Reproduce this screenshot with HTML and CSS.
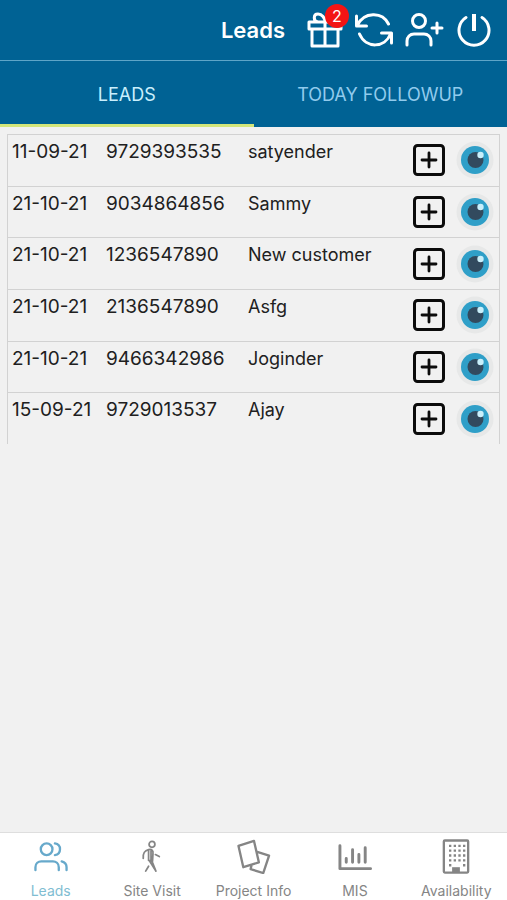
FILE: index.html
```html
<!DOCTYPE html>
<html lang="en">
<head>
    <meta charset="UTF-8">
    <meta name="viewport" content="width=device-width, initial-scale=1.0">
    <title>Leads</title>
    <link rel="stylesheet" href="styles.css">
</head>
<body>
    <!-- Shared icons -->
    <svg class="sprite" aria-hidden="true">
        <symbol id="plus" viewBox="0 0 32 32">
            <rect x="1.5" y="1.5" width="29" height="29" rx="3" fill="none" stroke="#0b0b0b" stroke-width="3"/>
            <path d="M16 9v14M9 16h14" fill="none" stroke="#0b0b0b" stroke-width="2.800" stroke-linecap="round"/>
        </symbol>
        <symbol id="eye" viewBox="0 0 38 38">
            <circle cx="19" cy="19" r="18.500" fill="#e7e8e8"/>
            <circle cx="19" cy="19" r="14" fill="#2f9fc8"/>
            <circle cx="19.500" cy="19" r="8" fill="#324a5e"/>
            <circle cx="24.500" cy="14" r="3.200" fill="#c9effa"/>
        </symbol>
    </svg>

    <header class="header">
        <h1>Leads</h1>
        <div class="actions">
            <button class="action" aria-label="Offers">
                <svg width="36" height="40" viewBox="0 0 36 40"><path d="M2 12h32v7H2zM5 19v17h26V19M18 12v24M18 12h-7c-5-1-5-8 0-8 4 0 7 4 7 8zm0 0h7c5-1 5-8 0-8-4 0-7 4-7 8z"/></svg>
                <span class="badge">2</span>
            </button>
            <button class="action" aria-label="Refresh">
                <svg width="38" height="34" viewBox="0 0 38 34"><path d="M1.500 3v10h10M2.500 12C9-1 27-2 33.500 11M36.500 30V20h-10M35.500 21C30 35 11 36 4.500 21"/></svg>
            </button>
            <button class="action" aria-label="Add lead">
                <svg width="40" height="34" viewBox="0 0 40 34"><circle cx="14" cy="8" r="6.500"/><path d="M2 32v-4c0-4 3-7 7-7h10c4 0 7 3 7 7v4M32 10v10M27 15h10"/></svg>
            </button>
            <button class="action" aria-label="Log out">
                <svg width="34" height="36" viewBox="0 0 34 36"><path d="M17 2v17" stroke-width="4" stroke-linecap="butt"/><path d="M9 5.500a15 15 0 1 0 16 0"/></svg>
            </button>
        </div>
    </header>

    <nav class="tabs">
        <a href="#" class="tab active">LEADS</a>
        <a href="#" class="tab">TODAY FOLLOWUP</a>
    </nav>

    <main class="content">
        <table class="leads">
            <tr>
                <td class="date">11-09-21</td><td class="phone">9729393535</td><td>satyender</td>
                <td class="tools"><div class="tools-row">
                    <button class="plus" aria-label="Add followup"><svg><use href="#plus"/></svg></button>
                    <button class="eye" aria-label="View lead"><svg><use href="#eye"/></svg></button>
                </div></td>
            </tr>
            <tr>
                <td class="date">21-10-21</td><td class="phone">9034864856</td><td>Sammy</td>
                <td class="tools"><div class="tools-row">
                    <button class="plus" aria-label="Add followup"><svg><use href="#plus"/></svg></button>
                    <button class="eye" aria-label="View lead"><svg><use href="#eye"/></svg></button>
                </div></td>
            </tr>
            <tr>
                <td class="date">21-10-21</td><td class="phone">1236547890</td><td>New customer</td>
                <td class="tools"><div class="tools-row">
                    <button class="plus" aria-label="Add followup"><svg><use href="#plus"/></svg></button>
                    <button class="eye" aria-label="View lead"><svg><use href="#eye"/></svg></button>
                </div></td>
            </tr>
            <tr>
                <td class="date">21-10-21</td><td class="phone">2136547890</td><td>Asfg</td>
                <td class="tools"><div class="tools-row">
                    <button class="plus" aria-label="Add followup"><svg><use href="#plus"/></svg></button>
                    <button class="eye" aria-label="View lead"><svg><use href="#eye"/></svg></button>
                </div></td>
            </tr>
            <tr>
                <td class="date">21-10-21</td><td class="phone">9466342986</td><td>Joginder</td>
                <td class="tools"><div class="tools-row">
                    <button class="plus" aria-label="Add followup"><svg><use href="#plus"/></svg></button>
                    <button class="eye" aria-label="View lead"><svg><use href="#eye"/></svg></button>
                </div></td>
            </tr>
            <tr>
                <td class="date">15-09-21</td><td class="phone">9729013537</td><td>Ajay</td>
                <td class="tools"><div class="tools-row">
                    <button class="plus" aria-label="Add followup"><svg><use href="#plus"/></svg></button>
                    <button class="eye" aria-label="View lead"><svg><use href="#eye"/></svg></button>
                </div></td>
            </tr>
        </table>
    </main>

    <!-- Bottom navigation -->
    <nav class="bottom-nav">
        <a href="#" class="nav-item active">
            <svg viewBox="0 0 36 36"><circle cx="13.500" cy="10.500" r="6"/><path d="M2 32v-3c0-4 3-6 6-6h12c3 0 6 2 6 6v3M22 4.500c7 1 7 11 0 12M29 23c3.500 1 5 3 5 6v3"/></svg>
            <span>Leads</span>
        </a>
        <a href="#" class="nav-item">
            <svg viewBox="0 0 36 36"><g stroke-width="1.800"><circle cx="18" cy="5.500" r="3"/><path d="M14.500 11c-4 1-6 3-5.500 9M14.500 11c3-1 5 1 4.500 4l-.5 8-4-1V11zM17 12v10M21.500 16l4 2M18 23l4 10M15 22l7 11M14.500 28l-3 5"/></g></svg>
            <span>Site Visit</span>
        </a>
        <a href="#" class="nav-item">
            <svg viewBox="0 0 36 36"><path d="M2 7l16-5 5 22-16 5zM20.500 13l13 4-6 18-13-4 1-4"/></svg>
            <span>Project Info</span>
        </a>
        <a href="#" class="nav-item">
            <svg viewBox="0 0 36 36"><path d="M2.500 7v23.500H34" stroke-width="3"/><path d="M9 20v4M15.500 11v13M22 16v8M28.500 9v15" stroke-width="3"/></svg>
            <span>MIS</span>
        </a>
        <a href="#" class="nav-item">
            <svg viewBox="0 0 36 36"><rect x="5.500" y="1.500" width="25" height="33" rx="1"/><path d="M10.800 7h17M10.800 12h17M10.800 17h17M10.800 22h17M10.800 27h2.400M25.200 27h2.400" stroke-width="2.400" stroke-dasharray="2.400 2.400" stroke-linecap="butt"/><path d="M14 29h8v5h-8z" fill="currentColor" stroke="none"/></svg>
            <span>Availability</span>
        </a>
    </nav>
</body>
</html>
```
FILE: styles.css
```css
* {
    box-sizing: border-box;
}

body {
    margin: 0;
    min-height: 100vh;
    display: flex;
    flex-direction: column;
    font-family: Inter, 'Liberation Sans', sans-serif;
    background-color: #f1f1f1;
    color: #202020;
}

.sprite {
    position: absolute;
    width: 0;
    height: 0;
}

button {
    padding: 0;
    border: none;
    background: none;
    cursor: pointer;
}

svg {
    display: block;
}

a {
    text-decoration: none;
}

/* Header */
.header {
    height: 61px;
    padding-right: 16px;
    display: flex;
    justify-content: flex-end;
    align-items: center;
    gap: 22px;
    background-color: #006294;
    border-bottom: 1px solid #5ea5c8;
    color: white;
}

.header h1 {
    margin: 0;
    font-size: 22px;
    font-weight: 600;
}

.actions {
    display: flex;
    align-items: center;
    gap: 12px;
}

.action {
    position: relative;
    color: white;
}

.action svg {
    fill: none;
    stroke: currentColor;
    stroke-width: 3;
    stroke-linecap: round;
    stroke-linejoin: round;
}

.badge {
    position: absolute;
    top: -6px;
    right: -6px;
    width: 24px;
    height: 24px;
    border-radius: 50%;
    background-color: #f31414;
    font-family: Inter, sans-serif;
    font-size: 16px;
    line-height: 24px;
}

/* Tabs */
.tabs {
    display: flex;
    height: 66px;
    background-color: #006294;
}

.tab {
    flex: 1;
    display: flex;
    justify-content: center;
    align-items: center;
    border-top: 3px solid transparent;
    border-bottom: 3px solid transparent;
    font-size: 18px;
    color: #91cbed;
}

.tab.active {
    color: #c9effd;
    border-bottom-color: #d3e67a;
}

/* Leads list */
.content {
    flex: 1;
    padding: 7px 7px 0;
}

.leads {
    width: 100%;
    height: 310px;
    table-layout: fixed;
    border-spacing: 0;
    border-left: 1px solid #d2d2d2;
    border-right: 1px solid #d2d2d2;
}

.leads td {
    padding: 6px 0 0;
    border-top: 1px solid #d2d2d2;
    vertical-align: top;
    font-size: 18px;
    line-height: 22px;
    white-space: nowrap;
}

.leads .date {
    width: 98px;
    padding-left: 4px;
    font-size: 19px;
}

.leads .phone {
    width: 142px;
    font-size: 19px;
}

.leads .tools {
    width: 90px;
    padding: 0 5px 0 0;
    vertical-align: middle;
}

.tools-row {
    display: flex;
    justify-content: flex-end;
    align-items: center;
    gap: 11px;
}

.plus svg {
    width: 32px;
    height: 32px;
}

.eye svg {
    width: 38px;
    height: 38px;
}

/* Bottom navigation */
.bottom-nav {
    display: flex;
    height: 68px;
    background-color: white;
    border-top: 1px solid #dedede;
}

.nav-item {
    flex: 1;
    display: flex;
    flex-direction: column;
    align-items: center;
    gap: 8px;
    padding-top: 6px;
    font-size: 14px;
    line-height: 18px;
    color: #858585;
}

.nav-item svg {
    width: 36px;
    height: 36px;
    fill: none;
    stroke: currentColor;
    stroke-width: 2.4;
    stroke-linecap: round;
    stroke-linejoin: round;
}

.nav-item.active {
    color: #7fbdd2;
}

.nav-item.active svg {
    color: #67a9cb;
}
```
